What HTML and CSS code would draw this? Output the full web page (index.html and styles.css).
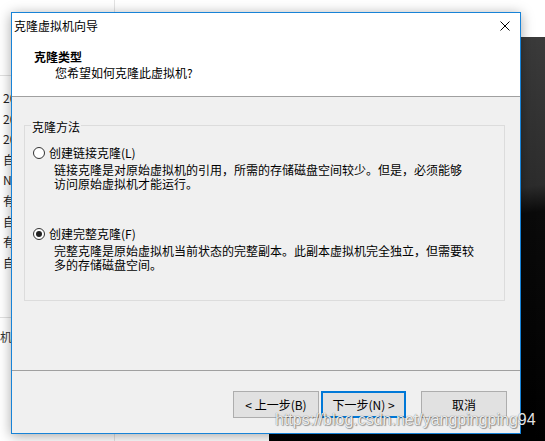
FILE: index.html
```html
<!DOCTYPE html>
<html lang="zh-CN">
<head>
<meta charset="utf-8">
<title>克隆虚拟机向导</title>
<link rel="stylesheet" href="styles.css">
</head>
<body>
<div class="desktop">
  <div class="bg-vline"></div>
  <div class="bg-hline bg-hline-top"></div>
  <div class="bg-hline bg-hline-bottom"></div>
  <div class="bg-list">
    <div>2018</div>
    <div>2018</div>
    <div>2018</div>
    <div>自动</div>
    <div>NAT</div>
    <div>有效</div>
    <div>自动</div>
    <div>有效</div>
    <div>自动</div>
  </div>
  <div class="bg-note">机自</div>
  <div class="dark-panel"></div>

  <div class="dialog">
    <div class="titlebar">
      <span class="title">克隆虚拟机向导</span>
      <svg class="close" width="10" height="10" viewBox="0 0 10 10"><path d="M0.5 0.5 L9.5 9.5 M9.5 0.5 L0.5 9.5" stroke="#000" stroke-width="1" fill="none"/></svg>
    </div>
    <div class="header">
      <div class="h-title">克隆类型</div>
      <div class="h-sub">您希望如何克隆此虚拟机?</div>
    </div>
    <div class="body">
      <fieldset class="group">
        <legend>克隆方法</legend>
        <div class="option">
          <span class="radio"></span>
          <span class="label">创建链接克隆(L)</span>
        </div>
        <div class="desc">链接克隆是对原始虚拟机的引用，所需的存储磁盘空间较少。但是，必须能够<br>访问原始虚拟机才能运行。</div>
        <div class="option option-2">
          <span class="radio checked"></span>
          <span class="label">创建完整克隆(F)</span>
        </div>
        <div class="desc">完整克隆是原始虚拟机当前状态的完整副本。此副本虚拟机完全独立，但需要较<br>多的存储磁盘空间。</div>
      </fieldset>
    </div>
    <div class="footer">
      <button class="btn btn-back">&lt; 上一步(B)</button>
      <button class="btn btn-next">下一步(N) &gt;</button>
      <button class="btn btn-cancel">取消</button>
    </div>
  </div>

  <div class="watermark">https://blog.csdn.net/yangpingping94</div>
</div>
</body>
</html>
```

FILE: styles.css
```css
* { box-sizing: border-box; }

html, body {
  margin: 0;
  padding: 0;
  background: #ffffff;
}

body {
  font-family: "Noto Sans CJK SC", "Microsoft YaHei", sans-serif;
  font-size: 12px;
  color: #000;
}

.desktop {
  position: relative;
  width: 545px;
  height: 441px;
  overflow: hidden;
  background: #ffffff;
}

.bg-vline {
  position: absolute;
  left: 114px;
  top: 0;
  width: 1px;
  height: 441px;
  background: #e3e3e3;
}

.bg-hline {
  position: absolute;
  left: 0;
  width: 120px;
  height: 1px;
  background: #e0e0e0;
}
.bg-hline-top { top: 75px; }
.bg-hline-bottom { top: 317px; }

.bg-list {
  position: absolute;
  left: 3px;
  top: 88px;
  line-height: 20.6px;
  font-size: 12px;
  color: #222;
}

.bg-note {
  position: absolute;
  left: 0;
  top: 329px;
  line-height: 16px;
  color: #333;
}

.dark-panel {
  position: absolute;
  left: 269px;
  top: 37px;
  width: 276px;
  height: 404px;
  background: linear-gradient(172deg, #3e3e3e 0%, #2c2c2c 42%, #0a0a0a 48%, #000 100%);
}

.dialog {
  position: absolute;
  left: 11px;
  top: 12px;
  width: 510px;
  height: 422px;
  border: 1px solid #1883d7;
  background: #f0f0f0;
  display: flex;
  flex-direction: column;
  box-shadow: 0 2px 12px rgba(0, 0, 0, 0.35);
}

.titlebar {
  height: 26px;
  background: #fff;
  display: flex;
  align-items: center;
  justify-content: space-between;
  padding: 0 10px 0 2px;
}

.title {
  line-height: 26px;
  font-size: 12px;
}

.close { display: block; }

.header {
  height: 58px;
  background: #fff;
  border-bottom: 1px solid #a0a0a0;
  padding: 10px 0 0 22px;
}

.h-title {
  font-weight: bold;
  line-height: 16px;
}

.h-sub {
  line-height: 16px;
  padding-left: 21px;
}

.body {
  height: 274px;
  border-bottom: 1px solid #a0a0a0;
  padding: 19px 15px 0 12px;
}

.group {
  margin: 0;
  border: 1px solid #dcdcdc;
  padding: 12px 6px 28px 6px;
  min-width: 0;
}

.group legend {
  padding: 4px 1px 0 1px;
  line-height: 14px;
  font-size: 12px;
}

.option {
  display: flex;
  align-items: center;
  height: 14px;
  line-height: 14px;
}

.option-2 { margin-top: 36px; }

.radio {
  width: 12px;
  height: 12px;
  margin-left: 2px;
  margin-right: 4px;
  border: 1px solid #333;
  border-radius: 50%;
  background: #fff;
  display: flex;
  align-items: center;
  justify-content: center;
  flex: none;
}

.radio.checked::after {
  content: "";
  width: 6px;
  height: 6px;
  border-radius: 50%;
  background: #222;
}

.desc {
  margin-top: 3px;
  margin-left: 23px;
  line-height: 14px;
}

.footer {
  flex: 1;
  display: flex;
  justify-content: flex-end;
  align-items: flex-start;
  padding: 20px 13px 0 0;
}

.btn {
  height: 27px;
  width: 86px;
  margin: 0;
  padding: 0;
  border: 1px solid #adadad;
  background: #e1e1e1;
  font-family: "Noto Sans CJK SC", "Microsoft YaHei", sans-serif;
  font-size: 12px;
  color: #000;
  line-height: 14px;
}

.btn-next {
  width: 85px;
  margin-left: 2px;
  border: 2px solid #0078d7;
}

.btn-cancel {
  margin-left: 15px;
}

.watermark {
  position: absolute;
  left: 275px;
  top: 411px;
  font-family: "Liberation Sans", Arial, sans-serif;
  font-size: 16px;
  line-height: 18px;
  color: rgba(255, 255, 255, 0.9);
  text-shadow: 0 0 1px rgba(0, 0, 0, 0.6), 1px 1px 1px rgba(0, 0, 0, 0.35);
  white-space: nowrap;
}
```
